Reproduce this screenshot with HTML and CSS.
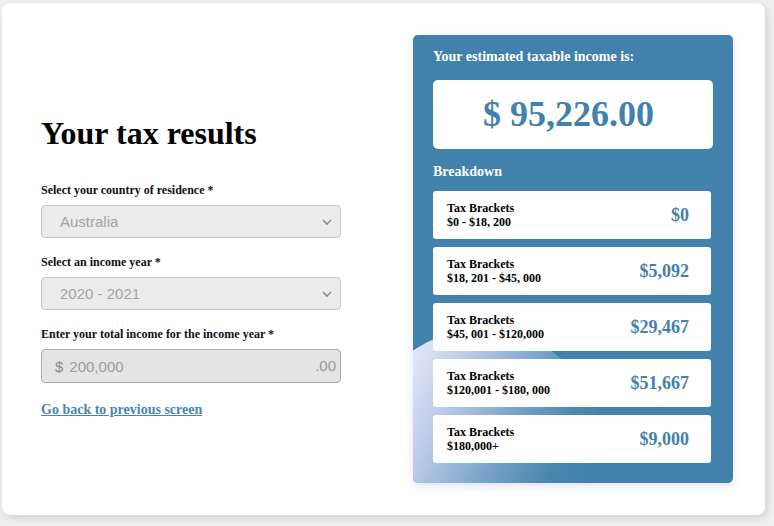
FILE: index.html
```html
<!DOCTYPE html>
<html lang="en">
<head>
<meta charset="utf-8">
<title>Your tax results</title>
<link rel="stylesheet" href="styles.css">
</head>
<body>
<div class="card">
  <section class="form-col">
    <h1 class="title">Your tax results</h1>
    <div class="field">
      <div class="label">Select your country of residence *</div>
      <div class="select">
        <span>Australia</span>
        <svg class="chev" width="10" height="6" viewBox="0 0 10 6"><path d="M1 1 L5 5 L9 1" fill="none" stroke="#8c8c8c" stroke-width="1.6"/></svg>
      </div>
    </div>
    <div class="field">
      <div class="label">Select an income year *</div>
      <div class="select">
        <span>2020 - 2021</span>
        <svg class="chev" width="10" height="6" viewBox="0 0 10 6"><path d="M1 1 L5 5 L9 1" fill="none" stroke="#8c8c8c" stroke-width="1.6"/></svg>
      </div>
    </div>
    <div class="field">
      <div class="label">Enter your total income for the income year *</div>
      <div class="input">
        <span class="cur">$</span>
        <span class="val">200,000</span>
        <span class="cents">.00</span>
      </div>
    </div>
    <a class="back" href="#">Go back to previous screen</a>
  </section>
  <aside class="panel">
    <div class="blob"></div>
    <div class="panel-title">Your estimated taxable income is:</div>
    <div class="total">$ 95,226.00</div>
    <div class="panel-sub">Breakdown</div>
    <div class="rows">
      <div class="row"><div class="row-text">Tax Brackets<br>$0 - $18, 200</div><div class="amt">$0</div></div>
      <div class="row"><div class="row-text">Tax Brackets<br>$18, 201 - $45, 000</div><div class="amt">$5,092</div></div>
      <div class="row"><div class="row-text">Tax Brackets<br>$45, 001 - $120,000</div><div class="amt">$29,467</div></div>
      <div class="row"><div class="row-text">Tax Brackets<br>$120,001 - $180, 000</div><div class="amt">$51,667</div></div>
      <div class="row"><div class="row-text">Tax Brackets<br>$180,000+</div><div class="amt">$9,000</div></div>
    </div>
  </aside>
</div>
</body>
</html>
```

FILE: styles.css
```css
html, body {
  margin: 0;
  padding: 0;
}
body {
  background: #efefef;
  font-family: "Liberation Serif", "Times New Roman", serif;
  width: 774px;
  height: 526px;
  overflow: hidden;
}
.card {
  box-sizing: border-box;
  margin: 3px 0 0 2px;
  width: 763px;
  height: 512px;
  background: #fff;
  border-radius: 8px;
  box-shadow: 2px 3px 7px rgba(0, 0, 0, 0.13);
  display: flex;
  align-items: flex-start;
  gap: 72px;
  padding: 32px 32px 32px 39px;
}
.form-col {
  width: 300px;
  margin-top: 80px;
}
.title {
  margin: 0 0 32px;
  font-size: 32px;
  line-height: 36px;
  font-weight: bold;
  color: #000;
}
.field {
  margin-bottom: 17px;
}
.label {
  font-size: 12px;
  font-weight: bold;
  line-height: 15px;
  margin-bottom: 7px;
  color: #111;
}
.select, .input {
  box-sizing: border-box;
  height: 33px;
  border-radius: 4px;
  display: flex;
  align-items: center;
  font-family: "Liberation Sans", Arial, sans-serif;
  font-size: 15px;
}
.select {
  border: 1px solid #c6c6c6;
  background: #ebebeb;
  color: #a3a3a3;
  padding: 0 8px 0 18px;
  justify-content: space-between;
}
.input {
  height: 34px;
  border: 1px solid #a9a9a9;
  background: #e4e4e4;
  color: #9b9b9b;
  padding: 0 4px 0 13px;
}
.cur {
  margin-right: 6px;
  color: #8f8585;
}
.val {
  flex: 1;
}
.cents {
  position: relative;
  top: -1px;
}
.back {
  display: block;
  margin-top: 19px;
  font-size: 14px;
  font-weight: bold;
  line-height: 16px;
  color: #4a84ad;
  text-decoration: underline;
  width: max-content;
}
.panel {
  position: relative;
  overflow: hidden;
  box-sizing: border-box;
  width: 320px;
  height: 448px;
  padding: 14px 20px 20px;
  background: #4181ab;
  border-radius: 5px;
  box-shadow: 0 3px 8px rgba(110, 125, 235, 0.22);
  color: #fff;
}
.blob {
  position: absolute;
  left: -52px;
  top: 294px;
  width: 242px;
  height: 242px;
  border-radius: 50%;
  background: linear-gradient(115deg, #f0f2ff 12%, #bccbe8 33%, #6f9ec5 57%, #4a87b0 72%, #4181ab 85%);
}
.panel-title, .panel-sub, .total, .rows {
  position: relative;
}
.panel-title, .panel-sub {
  font-size: 14px;
  font-weight: bold;
  line-height: 16px;
}
.panel-sub {
  line-height: 17px;
}
.total {
  margin: 15px 0 14px;
  height: 69px;
  background: #fff;
  border-radius: 5px;
  display: flex;
  align-items: center;
  justify-content: center;
  color: #4181ab;
  font-size: 36px;
  font-weight: bold;
  padding: 0 9px 2px 0;
  box-sizing: border-box;
}
.rows {
  margin-top: 11px;
  width: 278px;
  display: flex;
  flex-direction: column;
  gap: 8px;
}
.row {
  height: 48px;
  box-sizing: border-box;
  background: #fff;
  border-radius: 3px;
  display: flex;
  align-items: center;
  justify-content: space-between;
  padding: 0 22px 0 14px;
}
.row-text {
  color: #000;
  font-size: 12px;
  font-weight: bold;
  line-height: 14px;
}
.amt {
  color: #4181ab;
  font-size: 18px;
  font-weight: bold;
}
```
